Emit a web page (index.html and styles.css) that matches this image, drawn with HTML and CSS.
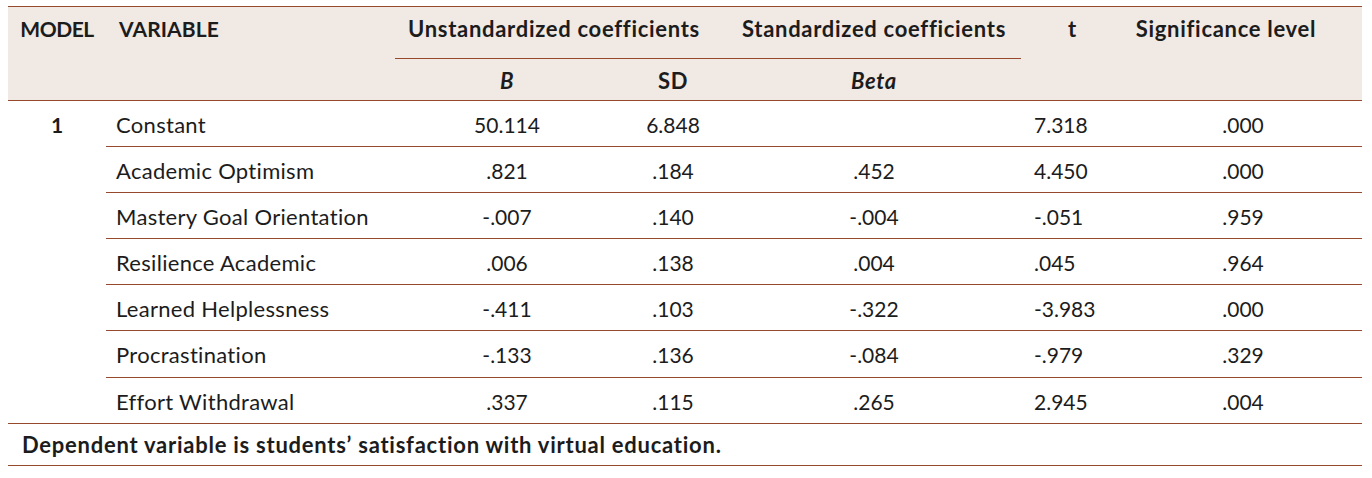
FILE: index.html
```html
<!DOCTYPE html>
<html lang="en">
<head>
<meta charset="utf-8">
<title>Regression coefficients</title>
<link rel="stylesheet" href="styles.css">
</head>
<body>
<div class="page">
<table class="reg">
  <colgroup>
    <col class="c-model"><col class="c-var"><col class="c-b"><col class="c-sd"><col class="c-beta"><col class="c-t"><col class="c-sig">
  </colgroup>
  <thead>
    <tr>
      <th rowspan="2" class="h-model">MODEL</th>
      <th rowspan="2" class="h-var">VARIABLE</th>
      <th colspan="2" class="h-group h-unstd">Unstandardized coefficients</th>
      <th class="h-group">Standardized coefficients</th>
      <th rowspan="2" class="h-t">t</th>
      <th rowspan="2" class="h-sig">Significance level</th>
    </tr>
    <tr>
      <th class="h-sub"><em>B</em></th>
      <th class="h-sub">SD</th>
      <th class="h-sub"><em>Beta</em></th>
    </tr>
  </thead>
  <tbody>
    <tr>
      <td rowspan="7" class="model">1</td>
      <td class="var">Constant</td><td class="num">50.114</td><td class="num">6.848</td><td class="num"></td><td class="tval">7.318</td><td class="num">.000</td>
    </tr>
    <tr><td class="var">Academic Optimism</td><td class="num">.821</td><td class="num">.184</td><td class="num">.452</td><td class="tval">4.450</td><td class="num">.000</td></tr>
    <tr><td class="var">Mastery Goal Orientation</td><td class="num">-.007</td><td class="num">.140</td><td class="num">-.004</td><td class="tval">-.051</td><td class="num">.959</td></tr>
    <tr><td class="var">Resilience Academic</td><td class="num">.006</td><td class="num">.138</td><td class="num">.004</td><td class="tval">.045</td><td class="num">.964</td></tr>
    <tr><td class="var">Learned Helplessness</td><td class="num">-.411</td><td class="num">.103</td><td class="num">-.322</td><td class="tval">-3.983</td><td class="num">.000</td></tr>
    <tr class="tall"><td class="var">Procrastination</td><td class="num">-.133</td><td class="num">.136</td><td class="num">-.084</td><td class="tval">-.979</td><td class="num">.329</td></tr>
    <tr class="last"><td class="var">Effort Withdrawal</td><td class="num">.337</td><td class="num">.115</td><td class="num">.265</td><td class="tval">2.945</td><td class="num">.004</td></tr>
  </tbody>
  <tfoot>
    <tr><td colspan="7" class="note">Dependent variable is students’ satisfaction with virtual education.</td></tr>
  </tfoot>
</table>
</div>
</body>
</html>
```

FILE: styles.css
```css
html, body {
  margin: 0;
  padding: 0;
  background: #ffffff;
}
.page {
  padding: 6px 10px 0 8px;
}
.reg {
  width: 1354px;
  table-layout: fixed;
  border-collapse: separate;
  border-spacing: 0;
  border-top: 1px solid #97492b;
  font-family: "Lato", "Noto Sans", sans-serif;
  font-size: 22px;
  line-height: 25px;
  color: #1c1c1c;
  font-variant-ligatures: none;
  font-feature-settings: "liga" 0, "clig" 0;
}
.c-model { width: 98px; }
.c-var { width: 289px; }
.c-b { width: 224px; }
.c-sd { width: 108px; }
.c-beta { width: 294px; }
.c-t { width: 103px; }
.c-sig { width: 238px; }

.reg th {
  background: #f1e9e4;
  font-weight: 700;
  letter-spacing: 0.7px;
  text-align: center;
  vertical-align: top;
  padding: 0;
  white-space: nowrap;
}
.reg th em { font-style: italic; }
.h-model, .h-var, .h-t, .h-sig {
  padding-top: 9px !important;
  border-bottom: 1px solid #97492b;
}
.reg .h-model { font-size: 21px; letter-spacing: -0.5px; }
.reg .h-var { text-align: left; padding-left: 13px; font-size: 21px; letter-spacing: 0.1px; }
.h-sig { padding-right: 34px !important; }
.h-group {
  padding: 9px 0 17px 0 !important;
  border-bottom: 1px solid #97492b;
}
.h-unstd { padding-right: 14px !important; }
.h-sub {
  padding: 9px 0 7px 0 !important;
  border-bottom: 1px solid #97492b;
}

.reg td {
  padding: 11px 0 9px 0;
  border-bottom: 1px solid #97492b;
  vertical-align: top;
  white-space: nowrap;
}
.reg tr.tall td { padding-bottom: 10px; }
.reg td.model {
  border-bottom: none;
  text-align: center;
  font-weight: 700;
  font-size: 21px;
}
.reg td.var { padding-left: 10px; letter-spacing: 0.3px; }
.reg td.num { text-align: center; font-size: 21px; }
.reg td.tval { padding-left: 13px; font-size: 21px; }
.reg tr.last td { border-bottom: none; }
.reg td.note {
  border-top: 1px solid #97492b;
  border-bottom: 1px solid #97492b;
  padding: 8px 0 8px 14px;
  font-weight: 700;
  letter-spacing: 0.75px;
}
```
